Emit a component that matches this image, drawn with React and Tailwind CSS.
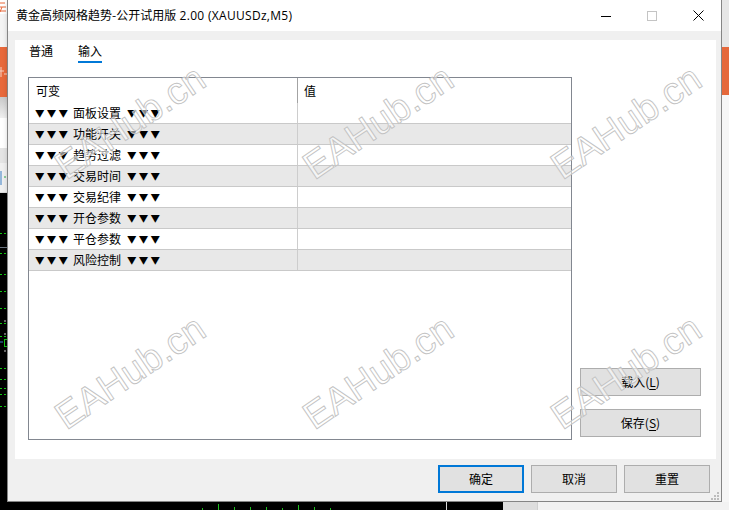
import React from "react";

const groups = ["面板设置", "功能开关", "趋势过滤", "交易时间", "交易纪律", "开仓参数", "平仓参数", "风险控制"];

const stamps = [
  [130, 122], [378, 122], [626, 122],
  [130, 372], [378, 372], [626, 372],
];

const chartDashes = [41, 61, 82, 99, 116, 131, 144, 176, 187, 196, 202, 214];
const axisTicks = [
  [202, 2], [218, 6], [234, 3], [250, 3], [266, 3], [282, 2], [298, 5], [314, 3], [330, 2],
];

function Watermark() {
  return (
    <svg className="absolute inset-0 pointer-events-none" width="729" height="510">
      {stamps.map(([x, y]) => (
        <text
          key={`${x}-${y}`}
          x={x}
          y={y}
          textAnchor="middle"
          dominantBaseline="central"
          transform={`rotate(-34 ${x} ${y})`}
          fontFamily="Liberation Sans, Arial, sans-serif"
          fontSize="38"
          fill="rgba(255,255,255,0.55)"
          stroke="#c2c2c2"
          strokeWidth="0.9"
        >
          EAHub.cn
        </text>
      ))}
    </svg>
  );
}

function LeftStrip() {
  return (
    <div className="w-[7px] flex flex-col shrink-0">
      <div className="h-[14px] bg-white flex items-center">
        <svg width="7" height="14">
          <path d="M0 3h5M0 7h6M2 7l-2 5M0 11h6" stroke="#e8693b" strokeWidth="1" fill="none" />
        </svg>
      </div>
      <div className="h-[33px] bg-[#f4f4f4]" />
      <div className="h-[50px] bg-[#e8693b] flex items-center">
        <svg width="7" height="14">
          <path d="M1 2v10M0 6h4M4 9h3" stroke="#f6d2c2" strokeWidth="1" fill="none" />
        </svg>
      </div>
      <div className="h-[21px] bg-gradient-to-b from-[#c9c9c9] to-[#f0f0f0]" />
      <div className="h-[30px] bg-white" />
      <div className="h-[15px] bg-[#e4e4e4]" />
      <div className="h-[29px] bg-[#f0f0f0] flex items-center">
        <svg width="7" height="16">
          <path d="M1 1v14" stroke="#3a7fc4" strokeWidth="1" />
          <path d="M4 7h2" stroke="#2aa84a" strokeWidth="1" />
        </svg>
      </div>
      <svg className="flex-1 bg-black" width="7" height="310">
        <path d="M0 0.5h7" stroke="#dcdcdc" />
        <path d="M0 55.5h7" stroke="#6a7480" />
        {chartDashes.map((y) => (
          <path key={y} d={`M0 ${y + 0.5}h7`} stroke="#14c814" strokeDasharray="2 2" />
        ))}
        <rect x="4.5" y="147.5" width="3" height="7" fill="none" stroke="#14c814" />
        <path d="M0 150h3" stroke="#3a7fc4" />
        <path d="M5 128v2M5 141v2M5 158v2" stroke="#d0d0d0" />
      </svg>
    </div>
  );
}

function RightStrip() {
  return (
    <div className="w-[7px] flex flex-col shrink-0">
      <div className="h-[47px] bg-[#e6e6e6]" />
      <div className="h-[48px] bg-[#e5683b]" />
      <div className="flex-1 bg-[#f6f6f6]" />
    </div>
  );
}

function BottomStrip() {
  return (
    <div className="flex h-[8px]">
      <svg className="bg-black" width="503" height="8">
        {axisTicks.map(([x, h]) => (
          <path key={x} d={`M${x + 0.5} ${8 - h}v${h}`} stroke="#1fbf1f" />
        ))}
        <path d="M446.5 0v8" stroke="#d8d8d8" />
      </svg>
      <div className="w-[34px] bg-[#dedede]" />
      <div className="flex-1 bg-[#f2f2f2] border-l border-[#d0d0d0]" />
    </div>
  );
}

function CaptionButtons() {
  return (
    <div className="flex h-full">
      <div className="w-[46px] flex items-center justify-center">
        <svg width="10" height="10">
          <path d="M0 5.5h10" stroke="#000" />
        </svg>
      </div>
      <div className="w-[46px] flex items-center justify-center">
        <svg width="10" height="10">
          <rect x="0.5" y="0.5" width="9" height="9" fill="none" stroke="#c4c4c4" />
        </svg>
      </div>
      <div className="w-[46px] flex items-center justify-center">
        <svg width="11" height="11">
          <path d="M0.5 0.5l10 10M10.5 0.5l-10 10" stroke="#000" />
        </svg>
      </div>
    </div>
  );
}

// three section markers, each on a full-width cell
function Arrows() {
  return (
    <span className="flex text-[9.5px] leading-none pt-[2px]">
      <span className="w-[11.7px]">▼</span>
      <span className="w-[11.7px]">▼</span>
      <span className="w-[11.7px]">▼</span>
    </span>
  );
}

function ParamTable() {
  return (
    <div className="w-[544px] h-[363px] border border-[#828790] bg-white flex flex-col shrink-0">
      <div className="flex h-[25px] text-black">
        <div className="w-[269px] border-r border-[#a3a3a3] pl-[7px] flex items-center">可变</div>
        <div className="pl-[6px] flex items-center">值</div>
      </div>
      {groups.map((name, i) => (
        <div
          key={name}
          className={`flex h-[21px] border-b border-[#c9c9c9] ${i % 2 === 1 ? "bg-[#e8e8e8]" : "bg-white"}`}
        >
          <div className="w-[269px] border-r border-[#cdcdcd] pl-[6px] flex items-center">
            <Arrows />
            <span className="ml-[3px] mr-[6px]">{name}</span>
            <Arrows />
          </div>
          <div className="flex-1" />
        </div>
      ))}
    </div>
  );
}

function SideButton({ label, hotkey }) {
  return (
    <button className="w-[121px] h-[28px] bg-[#e1e1e1] border border-[#adadad] flex items-center justify-center text-black">
      {label}(<span className="underline underline-offset-2">{hotkey}</span>)
    </button>
  );
}

function FooterButton({ label, primary }) {
  return (
    <button
      className={`w-[86px] h-[28px] bg-[#e1e1e1] flex items-center justify-center text-black ${
        primary ? "border-2 border-[#0078d7]" : "border border-[#adadad]"
      }`}
    >
      {label}
    </button>
  );
}

function Dialog() {
  return (
    <div className="w-[715px] h-[502px] border-x border-b border-[#858585] flex flex-col bg-[#f0f0f0] shadow-[2px_2px_6px_rgba(0,0,0,0.35)] shrink-0">
      <div className="h-[31px] bg-white flex items-center justify-between">
        <div className="pl-[8px] text-[12px] text-black">
          黄金高频网格趋势-公开试用版
          <span className="font-['Open_Sans','Noto_Sans_CJK_SC',sans-serif] tracking-[0.3px]"> 2.00 (XAUUSDz,M5)</span>
        </div>
        <CaptionButtons />
      </div>

      <div className="flex-1 flex flex-col relative">
        <div className="mt-[9px] ml-[7px] mr-[5px] h-[419px] bg-white flex flex-col">
          <div className="flex gap-[25px] pl-[14px] h-[23px]">
            <div className="h-full flex items-center pb-[2px]">普通</div>
            <div className="h-full flex items-center border-b-2 border-[#0078d7]">输入</div>
          </div>
          <div className="flex mt-[14px] pl-[13px]">
            <ParamTable />
            <div className="ml-[8px] flex flex-col justify-end gap-[13px] pb-[3px]">
              <SideButton label="载入" hotkey="L" />
              <SideButton label="保存" hotkey="S" />
            </div>
          </div>
        </div>

        <div className="flex justify-end gap-[7px] mt-[6px] mr-[11px]">
          <FooterButton label="确定" primary />
          <FooterButton label="取消" />
          <FooterButton label="重置" />
        </div>

        <svg className="absolute right-[2px] bottom-[1px]" width="9" height="9">
          <rect x="7" y="1" width="2" height="2" fill="#bcbcbc" />
          <rect x="4" y="4" width="2" height="2" fill="#bcbcbc" />
          <rect x="7" y="4" width="2" height="2" fill="#bcbcbc" />
          <rect x="1" y="7" width="2" height="2" fill="#bcbcbc" />
          <rect x="4" y="7" width="2" height="2" fill="#bcbcbc" />
          <rect x="7" y="7" width="2" height="2" fill="#bcbcbc" />
        </svg>
      </div>
    </div>
  );
}

export default function App() {
  return (
    <div className="relative w-[729px] h-[510px] overflow-hidden bg-black text-[12px] text-black font-['Noto_Sans_CJK_SC','Microsoft_YaHei',sans-serif]">
      <div className="flex h-[502px]">
        <LeftStrip />
        <Dialog />
        <RightStrip />
      </div>
      <BottomStrip />
      <Watermark />
    </div>
  );
}
